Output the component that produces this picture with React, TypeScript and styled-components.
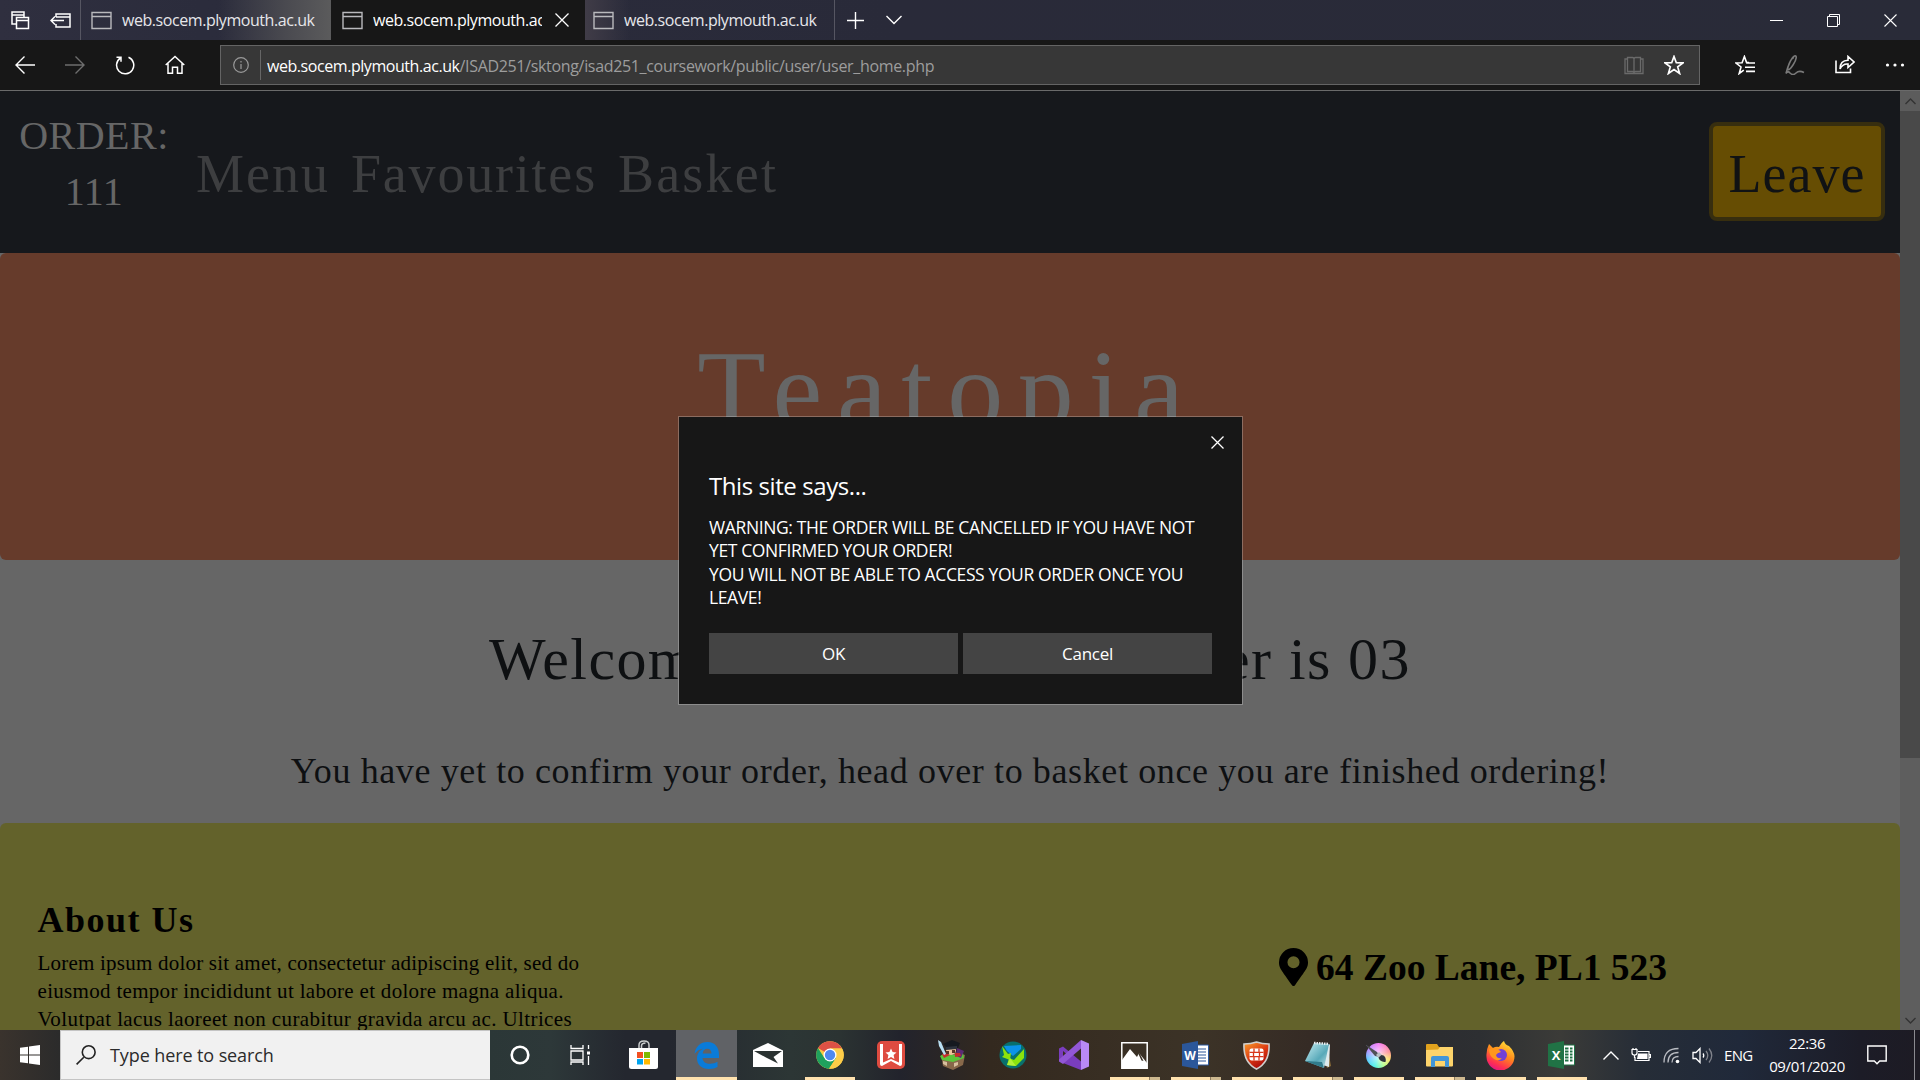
import React from 'react';
import styled, { createGlobalStyle } from 'styled-components';

const serif = '"Liberation Serif", serif';
const sans = '"Open Sans", "Noto Sans", sans-serif';

const Global = createGlobalStyle`
  * { box-sizing: border-box; }
  body { margin: 0; background: #171717; overflow: hidden; }
  svg { display: block; flex: none; }
`;

const Screen = styled.div`
  position: relative;
  display: flex;
  flex-direction: column;
  width: 1920px;
  height: 1080px;
  overflow: hidden;
  white-space: nowrap;
`;

/* ---------- Tab strip ---------- */
const TabStrip = styled.div`
  display: flex;
  height: 40px;
  background: linear-gradient(90deg, #2f2f3f 0, #2b2c3c 200px, #292a39 900px, #292b38 1920px);
  color: #fff;
`;
const TabTools = styled.div`
  display: flex;
  align-items: center;
  gap: 20px;
  width: 81px;
  padding-left: 10px;
  border-right: 1px solid #565662;
`;
const Tab = styled.div<{ $width: number; $kind: 'glow' | 'active' | 'plain' }>`
  display: flex;
  align-items: center;
  gap: 10px;
  width: ${p => p.$width}px;
  padding-left: ${p => (p.$kind === 'active' ? 11 : p.$kind === 'plain' ? 8 : 10)}px;
  font: 16px ${sans};
  letter-spacing: -0.44px;
  color: ${p => (p.$kind === 'active' ? '#fff' : '#e6e6ea')};
  background: ${p =>
    p.$kind === 'active'
      ? '#171717'
      : p.$kind === 'glow'
        ? 'linear-gradient(90deg, transparent 55%, #4a4a50 82%, #5b5b5c)'
        : 'linear-gradient(90deg, #403c47, transparent 18%)'};
  border-right: ${p => (p.$kind === 'plain' ? '1px solid #565662' : '0')};
`;
const TabTitle = styled.span<{ $clip?: boolean }>`
  width: ${p => (p.$clip ? '169px' : 'auto')};
  margin-right: ${p => (p.$clip ? '3px' : '0')};
  overflow: hidden;
  line-height: 38px;
`;
const TabActions = styled.div`
  display: flex;
  align-items: center;
  gap: 22px;
  flex: 1;
  padding-left: 12px;
`;
const WindowButtons = styled.div`
  display: flex;
  align-items: center;
  gap: 44px;
  padding-right: 23px;
`;

/* ---------- Address bar ---------- */
const NavBar = styled.div`
  display: flex;
  height: 51px;
  background: #171717;
  border-bottom: 1px solid #6a6a6a;
  padding-top: 5px;
`;
const NavButtons = styled.div`
  display: flex;
  align-items: center;
  gap: 30px;
  width: 220px;
  height: 40px;
  padding-left: 15px;
`;
const UrlBox = styled.div`
  display: flex;
  align-items: center;
  width: 1480px;
  height: 40px;
  background: #373737;
  border: 1px solid #646464;
  padding: 0 15px 0 12px;
  font: 16px ${sans};
  color: #9d9d9d;
`;
const UrlDivider = styled.i`
  width: 1px;
  height: 30px;
  margin: 0 6px 0 11px;
  background: #666;
`;
const UrlHost = styled.span`
  color: #fff;
  letter-spacing: -0.44px;
  padding-top: 1px;
`;
const UrlPath = styled.span`
  flex: 1;
  letter-spacing: -0.33px;
  padding-top: 1px;
`;
const UrlIcons = styled.div`
  display: flex;
  align-items: center;
  gap: 20px;
`;
const NavTools = styled.div`
  display: flex;
  align-items: center;
  height: 40px;
  gap: 30px;
  padding-left: 35px;
`;

/* ---------- Page ---------- */
const Viewport = styled.div`
  display: flex;
  height: 939px;
  background: #666;
`;
const Page = styled.div`
  width: 1900px;
  height: 939px;
  overflow: hidden;
  font-family: ${serif};
  color: #0e1012;
`;
const ScrollBar = styled.div`
  display: flex;
  flex-direction: column;
  justify-content: space-between;
  width: 20px;
  background: linear-gradient(#5c5c5c 20px, #494949 20px, #494949 667px, #5e5e5e 667px);
`;
const ScrollArrow = styled.div`
  display: flex;
  align-items: center;
  justify-content: center;
  height: 20px;
`;
const SiteHeader = styled.header`
  display: flex;
  height: 162px;
  padding: 0 15px 0 18px;
  background: #16181c;
`;
const OrderBox = styled.div`
  width: 152px;
  padding-top: 17px;
  font-size: 40px;
  line-height: 56px;
  letter-spacing: 0.5px;
  text-align: center;
  color: #666;
`;
const SiteNav = styled.nav`
  display: flex;
  flex: 1;
  gap: 21px;
  padding: 56px 0 0 26px;
`;
const SiteLink = styled.a<{ $track: number }>`
  font-size: 54px;
  line-height: 54px;
  letter-spacing: ${p => p.$track}px;
  color: #3d3e40;
`;
const LeaveButton = styled.div`
  width: 176px;
  height: 99px;
  margin-top: 31px;
  padding-top: 3px;
  border: 4px solid #372e0f;
  border-radius: 8px;
  background: #664d03;
  color: #101214;
  font-size: 54px;
  line-height: 91px;
  letter-spacing: 1px;
  text-align: center;
`;
const Hero = styled.div`
  display: flex;
  align-items: center;
  justify-content: center;
  height: 307px;
  padding: 0 4px 32px 0;
  border-radius: 6px;
  background: #663b2b;
  color: #666;
  font-size: 112px;
  letter-spacing: 14.7px;
`;
const Greeting = styled.section`
  height: 263px;
  padding-top: 63px;
  text-align: center;
`;
const GreetingTitle = styled.div`
  font-size: 60px;
  line-height: 72px;
  letter-spacing: 1.4px;
`;
const WideWords = styled.span`
  word-spacing: 14px;
`;
const GreetingNote = styled.div`
  margin-top: 54px;
  font-size: 36px;
  line-height: 44px;
  letter-spacing: 0.62px;
`;
const Footer = styled.footer`
  display: flex;
  height: 240px;
  border-radius: 6px;
  background: #63622b;
  color: #000;
`;
const About = styled.div`
  width: 1279px;
  padding: 75px 0 0 37.5px;
`;
const AboutTitle = styled.div`
  font-size: 36px;
  font-weight: 700;
  line-height: 44px;
  letter-spacing: 1.5px;
  margin-bottom: 6.5px;
`;
const AboutLine = styled.div<{ $track: number }>`
  font-size: 21px;
  line-height: 28px;
  letter-spacing: ${p => p.$track}px;
`;
const Address = styled.div`
  display: flex;
  align-items: center;
  gap: 8px;
  height: 44px;
  margin-top: 122px;
  font-size: 37.5px;
  font-weight: 700;
`;

/* ---------- Dialog ---------- */
const Dialog = styled.div`
  position: absolute;
  left: 678px;
  top: 416px;
  width: 565px;
  height: 289px;
  padding: 54px 30px 0;
  border: 1px solid rgba(255, 255, 255, 0.25);
  background: #171717;
  background-clip: padding-box;
  color: #fff;
  font-family: ${sans};
`;
const DialogClose = styled.div`
  position: absolute;
  right: 18px;
  top: 19px;
`;
const DialogTitle = styled.div`
  font-size: 24px;
  line-height: 30px;
  letter-spacing: -0.42px;
`;
const DialogText = styled.div`
  margin: 15px 0 23.8px;
  font-size: 17.5px;
  line-height: 23.3px;
  letter-spacing: -0.38px;
`;
const DialogButtons = styled.div`
  display: flex;
  gap: 5px;
`;
const DialogButton = styled.div`
  flex: 1;
  height: 41px;
  background: #444;
  font-size: 17px;
  line-height: 42px;
  letter-spacing: -0.3px;
  text-align: center;
`;

/* ---------- Taskbar ---------- */
const TaskBar = styled.div`
  display: flex;
  height: 50px;
  color: #fff;
  font-family: ${sans};
  background: linear-gradient(90deg, #3a332d 0, #2b2b2b 60px, #2b3737 490px, #2d3839 550px, #24272f 625px, #24272f 670px,
    #2c3635 790px, #2b3332 840px, #22232c 900px, #33291f 990px, #372d22 1080px, #3c3327 1200px, #352b25 1310px,
    #2b2b2e 1400px, #2d2f32 1480px, #3b3b38 1560px, #262d37 1640px, #20293a 1740px, #1c1c27 1860px, #1d1b24 1920px);
`;
const Cell = styled.div<{ $width: number; $active?: boolean }>`
  position: relative;
  display: flex;
  align-items: center;
  justify-content: center;
  width: ${p => p.$width}px;
  background: ${p => (p.$active ? '#606266' : 'transparent')};
`;
const SearchBox = styled.div`
  display: flex;
  align-items: center;
  gap: 14px;
  width: 430px;
  padding-left: 15px;
  background: #f1f1f1;
  border: 1px solid #c4c4c4;
  border-right: 0;
  color: #2b2b2b;
  font-size: 18px;
  letter-spacing: -0.1px;
`;
const Running = styled.i<{ $width: number; $stack?: boolean }>`
  position: absolute;
  bottom: 0;
  width: ${p => p.$width}px;
  height: 3px;
  background: ${p => (p.$stack ? 'linear-gradient(90deg, #ffe2ae 39px, #8d7b5e 39px, #8d7b5e 40px, #cdb88f 40px)' : '#ffe2ae')};
`;
const Tray = styled.div`
  display: flex;
  align-items: center;
  flex: 1;
  padding-left: 11px;
  font-size: 15px;
`;
const TrayIcons = styled.div`
  display: flex;
  align-items: center;
  gap: 12px;
  width: 121px;
`;
const Language = styled.div`
  width: 43px;
  letter-spacing: -0.7px;
`;
const Clock = styled.div`
  width: 80px;
  line-height: 23px;
  letter-spacing: -0.4px;
  text-align: center;
`;
const ActionCell = styled.div`
  display: flex;
  align-items: center;
  width: 68px;
  height: 50px;
  padding-left: 20px;
  border-right: 1px solid #8a8a90;
`;

/* ---------- Icons ---------- */
type LineProps = { w: number; h: number; d: string; c?: string; s?: number; children?: React.ReactNode };
const Line = ({ w, h, d, c = '#fff', s = 1.4, children }: LineProps) => (
  <svg width={w} height={h} viewBox={`0 0 ${w} ${h}`} fill="none" stroke={c} strokeWidth={s}>
    <path d={d} />
    {children}
  </svg>
);
const PageIcon = () => <Line w={21} h={19} c="#b9b9bd" d="M1 1.5h19v16H1zM1 5.5h19" />;
const CloseIcon = ({ size = 13, w = 1.3 }: { size?: number; w?: number }) => (
  <Line w={size} h={size} s={w} d={`M.5 .5L${size - 0.5} ${size - 0.5}M${size - 0.5} .5L.5 ${size - 0.5}`} />
);

const StoreIcon = () => (
  <svg width="30" height="30" viewBox="0 0 30 30">
    <path d="M10 9V5q0-4 5-4t5 4v4M12.500 9V6q0-3 4-3" fill="none" stroke="#c9cccd" strokeWidth="1.500" />
    <path d="M0 8h29v18.500q0 2.500-2.500 2.500h-24Q0 29 0 26.500z" fill="#fff" />
    <path d="M8 12h6v6H8z" fill="#f25022" /><path d="M15 12h6v6h-6z" fill="#7fba00" />
    <path d="M8 19h6v5.500H8z" fill="#00a4ef" /><path d="M15 19h6v5.500h-6z" fill="#ffb900" />
  </svg>
);
const EdgeIcon = () => (
  <svg width="26" height="27" viewBox="0 0 26 27">
    <path d="M.5 12C1.500 4.500 6.500 0 13.500 0 21 0 25 5.500 25 12.500V16H8.500c.3 4 3.300 5.800 7.500 5.800 3 0 5.500-.8 7.500-2V25c-2.300 1.200-5 2-8.500 2C7.500 27 3 22.500 3 16.500c0-4.500 2.500-8 6.500-10C5.500 7 2.500 9 .5 12zM8.700 11.500h8.800C17.400 8.500 16 6.800 13.300 6.800s-4.300 2-4.600 4.700z" fill="#0a7bd8" fillRule="evenodd" />
  </svg>
);
const MailIcon = () => (
  <svg width="30" height="25" viewBox="0 0 30 25">
    <path d="M0 7L15 0l15 7.500V24H0z" fill="#fff" />
    <path d="M1 8h28l-8.500 6L25 20.500 13 14.500z" fill="#2a3231" />
  </svg>
);
const ChromeIcon = () => (
  <svg width="28" height="28" viewBox="0 0 28 28">
    <circle cx="14" cy="14" r="13.800" fill="#f9cb45" />
    <path d="M14 14L2 7.100A13.800 13.800 0 0 1 26 7.500H14z" fill="#de5145" />
    <path d="M2 7.100A13.800 13.800 0 0 0 13 27.800L20 17 8.400 17z" fill="#1fa15d" />
    <path d="M14 7.500h12A13.800 13.800 0 0 1 13 27.800l7-10.500z" fill="#fdcd48" />
    <circle cx="14" cy="14" r="6.500" fill="#fff" /><circle cx="14" cy="14" r="5.200" fill="#4f89f0" />
  </svg>
);
const WunderIcon = () => (
  <svg width="28" height="28" viewBox="0 0 28 28">
    <rect width="28" height="28" rx="5" fill="#de4b40" />
    <path d="M3 3h3v18.500L14 18l8 3.500V3h3v20q0 2-2 2l-9-5-9 5q-2 0-2-2z" fill="#fff" />
    <path d="M14 7.500l1.600 3.600 3.900.4-2.900 2.600.8 3.900-3.400-2-3.400 2 .8-3.900-2.900-2.600 3.900-.4z" fill="#fff" />
  </svg>
);
const GameIcon = () => (
  <svg width="30" height="30" viewBox="0 0 30 30">
    <path d="M4 15l13-3 11 3-2 10-10 5-10-4z" fill="#87684a" />
    <path d="M3 16l6-3 8 2 9-2 1 5-11 4-11-2z" fill="#5cc43a" />
    <path d="M6 21l4 1v4l-4-2zM17 23l4-1v3l-4 2z" fill="#d8c09e" />
    <path d="M20 8l7 3-3 7-5-2z" fill="#5b2c75" /><path d="M5 14l5-2 3 3-6 3zM18 13l5 0 1 3-6 1z" fill="#c62d2b" />
    <circle cx="14" cy="10" r="5" fill="#efc49c" /><path d="M9 11h3v3H9zM15 10h3v3h-3z" fill="#5a3524" />
    <path d="M6 4l9-4 8 3-2 5-10 1z" fill="#15191f" /><path d="M9 7l11-1v3L9 10z" fill="#2c333d" />
    <path d="M1 0l3 2 5 12-2 1L2 6z" fill="#b9dff2" />
  </svg>
);
const ArrowsIcon = () => (
  <svg width="28" height="28" viewBox="0 0 28 28">
    <circle cx="14" cy="14" r="13.500" fill="#08706d" />
    <path d="M5 5l17-1 0 4-8 7-6-5z" fill="#0b93e8" />
    <path d="M3 5l6 8 3-1-1 7-8-3 2-2z" fill="#8be30d" />
    <path d="M25 8v9l-8 8-9-1 2-7 5 2z" fill="#8be30d" /><path d="M8 24l3-7 6 8z" fill="#b2f038" />
  </svg>
);
const VsIcon = () => (
  <svg width="30" height="30" viewBox="0 0 30 30">
    <path d="M0 8.500l4-2L22 21.500V30L4 23l-4-2zM4 11v8.500l5-4.300z" fill="#7a3dbd" fillRule="evenodd" />
    <path d="M4 24l-4-2.500 0-2L22 0v8.500z" fill="#9257d6" />
    <path d="M22 0l8 3.500v23L22 30z" fill="#b98af5" />
  </svg>
);
const PhotosIcon = () => (
  <svg width="27" height="27" viewBox="0 0 27 27">
    <path d="M.8.800h25.400v25.400H.800z" fill="none" stroke="#fff" strokeWidth="1.500" />
    <path d="M1 18l8-11 7 8 2-4 8 10v6H1z" fill="#fff" /><path d="M16.500 10l2 1 4 8-2-.5z" fill="#3a3024" />
  </svg>
);
const WordIcon = () => (
  <svg width="28" height="28" viewBox="0 0 28 28">
    <path d="M14 4h12.500v20H14z" fill="#fff" stroke="#2b579a" />
    <path d="M16 8h8M16 11h8M16 14h8M16 17h8M16 20h8" stroke="#2b579a" strokeWidth="1.200" />
    <path d="M0 3l16-3v28L0 25z" fill="#2b579a" />
    <text x="8" y="18.500" textAnchor="middle" fontFamily="Open Sans" fontWeight="700" fontSize="12" fill="#fff">W</text>
  </svg>
);
const ExcelIcon = () => (
  <svg width="28" height="28" viewBox="0 0 28 28">
    <path d="M14 4h12.500v20H14z" fill="#fff" stroke="#207245" />
    <path d="M17 7.500h3.500M17 10.500h3.500M17 13.500h3.500M17 16.500h3.500M17 19.500h3.500M22 7.500h2.500M22 10.500h2.500M22 13.500h2.500M22 16.500h2.500M22 19.500h2.500" stroke="#207245" strokeWidth="2" />
    <path d="M0 3l16-3v28L0 25z" fill="#207245" />
    <text x="8" y="19" textAnchor="middle" fontFamily="Open Sans" fontWeight="700" fontSize="13" fill="#fff">X</text>
  </svg>
);
const ShieldIcon = () => (
  <svg width="27" height="29" viewBox="0 0 27 29">
    <defs><linearGradient id="sh" x2="0.600" y2="1"><stop stopColor="#f9a02c" /><stop offset=".55" stopColor="#dd3a12" /><stop offset="1" stopColor="#a80b0b" /></linearGradient></defs>
    <path d="M1 3Q8 3 13.500 1 19 3 26 3q1 18-12.500 25Q0 21 1 3z" fill="url(#sh)" stroke="#d0cfcd" strokeWidth="1.600" />
    <rect x="6.500" y="7.500" width="14" height="12" rx="2" fill="#fff" />
    <path d="M11 7.500v3.500M16 7.500v3.500M6.500 11.300h14M6.500 15.600h14M11 15.600v4M16 15.600v4M10.500 11v5M16.500 11v5" stroke="#d8361a" strokeWidth="1.300" />
  </svg>
);
const NotepadIcon = () => (
  <svg width="28" height="28" viewBox="0 0 28 28">
    <defs><linearGradient id="np" x2="1" y2="1"><stop stopColor="#c8eef3" /><stop offset=".6" stopColor="#58a9b9" /><stop offset="1" stopColor="#cfe6ea" /></linearGradient></defs>
    <path d="M23 4l4 21-4 2-2-9z" fill="#8c6c38" /><path d="M20 8l6-5-1 23-6-2z" fill="#dfeaec" />
    <path d="M10 2L25 3 20 27 1 20z" fill="url(#np)" /><path d="M1 20l17 1 2 6z" fill="#317b8b" />
    <path d="M10 2L25 3" stroke="#e9eef0" strokeWidth="2.500" strokeDasharray="1.500 1" />
  </svg>
);
const Conic = styled.span`
  display: flex;
  width: 25px;
  height: 25px;
  border-radius: 50%;
  background: radial-gradient(circle, rgba(255, 255, 255, 0.75), transparent 70%),
    conic-gradient(#f47df5, #ff8f96 70deg, #ffe36a 110deg, #b8ff8a 150deg, #4df3e8 200deg, #5cc9ff 250deg, #b78bff 300deg, #f47df5);
`;
const KritaIcon = () => (
  <Conic>
    <svg width="25" height="25" viewBox="0 0 25 25">
      <path d="M-1 1l12 8 3 5-5-1z" fill="#4f5257" /><path d="M10 12l3-3 3 3-3 3z" fill="#b9bdc2" />
      <path d="M12.500 14.500l3-2.500c3 0 5 3 4 7-3 0-6-1-7-4.500z" fill="#30343c" />
    </svg>
  </Conic>
);
const FolderIcon = () => (
  <svg width="28" height="23" viewBox="0 0 28 23">
    <path d="M0 1q0-1 1-1h10l2 3h13q1 0 1 1v17H0z" fill="#e1a21d" /><path d="M0 6l12-.5L14 3h13v18.500q0 1-1 1H1q-1 0-1-1z" fill="#fdd46b" />
    <path d="M5 23v-9q0-2 2-2h14q2 0 2 2v9h-4v-6H9v6z" fill="#4296d8" />
  </svg>
);
const FirefoxIcon = () => (
  <svg width="29" height="29" viewBox="0 0 29 29">
    <defs><linearGradient id="ff" x1=".8" y1="0" x2=".3" y2="1"><stop stopColor="#ffe53a" /><stop offset=".45" stopColor="#ff8a1c" /><stop offset=".8" stopColor="#ff3150" /><stop offset="1" stopColor="#e31587" /></linearGradient></defs>
    <path d="M3 3l4 4q3-2 6-1 3-5 5-6 1 4 5 5 5 5 5.500 10A14 14 0 0 1 .5 16Q0 9 3 3z" fill="url(#ff)" />
    <circle cx="15" cy="14" r="6" fill="#7140d6" /><path d="M3 8q5-2 8-1l4 4q-4 1-5 3 1 4 6 3-3 4-8 1Q3 15 3 8z" fill="#ff971c" />
  </svg>
);

const tasks: { icon: React.ReactNode; width?: number; run?: boolean; stack?: boolean }[] = [
  { icon: <MailIcon />, width: 62 },
  { icon: <ChromeIcon />, run: true },
  { icon: <WunderIcon /> },
  { icon: <GameIcon /> },
  { icon: <ArrowsIcon /> },
  { icon: <VsIcon /> },
  { icon: <PhotosIcon />, run: true, stack: true },
  { icon: <WordIcon />, run: true, stack: true },
  { icon: <ShieldIcon />, run: true },
  { icon: <NotepadIcon />, run: true, stack: true },
  { icon: <KritaIcon />, run: true },
  { icon: <FolderIcon />, run: true, stack: true },
  { icon: <FirefoxIcon />, run: true },
  { icon: <ExcelIcon />, run: true },
];

const star = 'M10 1.500l2.300 6.200 6.700.2-5.300 4 1.900 6.600L10 14.600l-5.600 3.900 1.900-6.600L1 7.900l6.700-.2z';

export default function App() {
  return (
    <Screen>
      <Global />
      <TabStrip>
        <TabTools>
          <Line w={20} h={19} s={1.5} d="M6 13H2V1h12v5M2 4h12M6.500 6.500h12v11h-12zM6.500 9.500h12" />
          <Line w={21} h={17} s={1.5} d="M6 5V2h14v13H6v-3M6 5h14M14 8.500H1M5 4.500l-4 4 4 4" />
        </TabTools>
        <Tab $width={250} $kind="glow"><PageIcon /><TabTitle>web.socem.plymouth.ac.uk</TabTitle></Tab>
        <Tab $width={254} $kind="active">
          <PageIcon /><TabTitle $clip>web.socem.plymouth.ac.uk</TabTitle><CloseIcon size={14} />
        </Tab>
        <Tab $width={250} $kind="plain"><PageIcon /><TabTitle>web.socem.plymouth.ac.uk</TabTitle></Tab>
        <TabActions>
          <Line w={17} h={17} d="M8.500 0v17M0 8.500h17" />
          <Line w={16} h={10} d="M.5 1l7.500 7.500L15.500 1" />
        </TabActions>
        <WindowButtons>
          <Line w={13} h={13} s={1} d="M0 6.500h13" />
          <Line w={13} h={13} s={1} d="M.5 2.500h10v10H.5zM2.500 2.500v-2h10v10h-2" />
          <CloseIcon size={13} w={1.1} />
        </WindowButtons>
      </TabStrip>

      <NavBar>
        <NavButtons>
          <Line w={20} h={18} d="M9.500 .5L1 9l8.500 8.500M1 9h19" />
          <Line w={20} h={18} c="#6e6e6e" d="M10.500 .5L19 9l-8.500 8.500M0 9h19" />
          <Line w={20} h={20} s={1.5} d="M13.500 2.300A8.600 8.600 0 1 1 5.500 3M1.500 2.200H6v4.600" />
          <Line w={20} h={20} s={1.5} d="M.700 10L10 1.500 19.300 10M3 8.500v9.700h4.500v-6h5v6H17V8.500" />
        </NavButtons>
        <UrlBox>
          <Line w={16} h={16} s={1.2} c="#9a9a9a" d="M8 7v5M8 4v1.500"><circle cx="8" cy="8" r="7.300" /></Line>
          <UrlDivider />
          <UrlHost>web.socem.plymouth.ac.uk</UrlHost>
          <UrlPath>/ISAD251/sktong/isad251_coursework/public/user/user_home.php</UrlPath>
          <UrlIcons>
            <Line w={20} h={19} s={1.3} c="#6a6a6a" d="M3.500 1.500h5q1.500 0 1.500 1.500 0-1.500 1.500-1.500h5v14h-5q-1.500 0-1.500 1 0-1-1.500-1h-5zM10 2v15M3.500 3H1v14.500h18V3h-2.500" />
            <Line w={20} h={20} s={1.7} d={star} />
          </UrlIcons>
        </UrlBox>
        <NavTools>
          <Line w={20} h={20} s={1.6} d="M14 7.600l-2.400 0L9.400 1.500 7.100 7.700 1 8l5 4-1.800 6.500 4.600-3.400M11.500 8h8.500M10 12.200h10M11 16.400h9" />
          <Line w={20} h={20} s={1.6} c="#7a7a7a" d="M1 18.500C3 10 7 2 9.500 1S12 4 8 10s-6 6-5 2 4-10 6-9M1 18.500q2-3 4-.5 3 3 6 0t8-.5" />
          <Line w={20} h={20} s={1.6} d="M1 5.500v12h14.500v-4M5 14q0-8.500 8-8.700V1.500L19 7l-6 5.500V9Q7.500 8.500 5 14z" />
          <Line w={20} h={4} s={0} d=""><g fill="#fff"><circle cx="2.500" cy="2" r="1.600" /><circle cx="10" cy="2" r="1.600" /><circle cx="17.500" cy="2" r="1.600" /></g></Line>
        </NavTools>
      </NavBar>

      <Viewport>
        <Page>
          <SiteHeader>
            <OrderBox>ORDER:<br />111</OrderBox>
            <SiteNav>
              <SiteLink $track={2}>Menu</SiteLink>
              <SiteLink $track={1.8}>Favourites</SiteLink>
              <SiteLink $track={2.2}>Basket</SiteLink>
            </SiteNav>
            <LeaveButton>Leave</LeaveButton>
          </SiteHeader>
          <Hero>Teatopia</Hero>
          <Greeting>
            <GreetingTitle>Welcome<WideWords>! Your table </WideWords>number is 03</GreetingTitle>
            <GreetingNote>You have yet to confirm your order, head over to basket once you are finished ordering!</GreetingNote>
          </Greeting>
          <Footer>
            <About>
              <AboutTitle>About Us</AboutTitle>
              <AboutLine $track={0.22}>Lorem ipsum dolor sit amet, consectetur adipiscing elit, sed do</AboutLine>
              <AboutLine $track={0.31}>eiusmod tempor incididunt ut labore et dolore magna aliqua.</AboutLine>
              <AboutLine $track={0.4}>Volutpat lacus laoreet non curabitur gravida arcu ac. Ultrices</AboutLine>
            </About>
            <Address>
              <svg width="29" height="38" viewBox="0 0 384 512" preserveAspectRatio="none">
                <path d="M172 502C27 291 0 270 0 192a192 192 0 0 1 384 0c0 78-27 99-172 310a24 24 0 0 1-40 0zM192 272a80 80 0 1 0 0-160 80 80 0 0 0 0 160z" />
              </svg>
              64 Zoo Lane, PL1 523
            </Address>
          </Footer>
        </Page>
        <ScrollBar>
          <ScrollArrow><Line w={11} h={7} c="#333" d="M.5 6l5-5 5 5" /></ScrollArrow>
          <ScrollArrow><Line w={11} h={7} c="#333" d="M.5 1l5 5 5-5" /></ScrollArrow>
        </ScrollBar>
      </Viewport>

      <TaskBar>
        <Cell $width={60}>
          <svg width="20" height="20" viewBox="0 0 20 20" fill="#fff"><path d="M0 2.800L8 1.700v7.800H0zM9 1.500L20 0v9.500H9zM0 10.500h8v7.800l-8-1.100zM9 10.500h11V20L9 18.500z" /></svg>
        </Cell>
        <SearchBox>
          <Line w={20} h={20} c="#222" s={1.6} d="M7.800 12.200L.6 19.400"><circle cx="12.700" cy="7.200" r="6.400" /></Line>
          Type here to search
        </SearchBox>
        <Cell $width={60}><Line w={20} h={20} s={2.6} d=""><circle cx="10" cy="10" r="8.300" /></Line></Cell>
        <Cell $width={61}>
          <Line w={21} h={20} s={1.3} d="M1 0v3.500h12V0M1 6h12v9H1zM1 20v-3h12v3M18.500 0v4M18.500 11v9"><path d="M17 6.500h3v3h-3z" fill="#fff" stroke="none" /></Line>
        </Cell>
        <Cell $width={65}><StoreIcon /></Cell>
        <Cell $width={61} $active><EdgeIcon /><Running $width={61} /></Cell>
        {tasks.map((t, i) => (
          <Cell key={i} $width={t.width ?? 61}>
            {t.icon}
            {t.run && <Running $width={50} $stack={t.stack} />}
          </Cell>
        ))}
        <Tray>
          <TrayIcons>
            <Line w={16} h={9} d="M.5 8.500L8 1l7.500 7.500" />
            <Line w={20} h={14} s={1.2} d="M7 3.500h11v9H4V9M18 6.500h1.500v3H18M1 1.500h5V5q0 2-2.500 2T1 5zM2 0v2M5 0v2M3.500 7v3"><path d="M7 5.500h9.500v5.500H6z" fill="#fff" stroke="none" /></Line>
            <Line w={17} h={17} s={1.3} c="#b9bcc2" d="M1 15.500Q1 1.500 15.500 1.500M5 15.500Q5 5.500 15.500 5.500M9 15.500q0-6 6.500-6"><circle cx="14.500" cy="14.500" r="1.800" fill="#fff" stroke="none" /></Line>
            <Line w={21} h={17} s={1.3} d="M1 5.500h3l4-4v14l-4-4H1zM11 6.500q1.500 2 0 4"><path d="M14 4q3.500 4.500 0 9M17 1.500q5.500 7 0 14" stroke="#80838b" /></Line>
          </TrayIcons>
          <Language>ENG</Language>
          <Clock>22:36<br />09/01/2020</Clock>
          <ActionCell>
            <Line w={20} h={20} s={1.4} d="M.8 1h18.400v15h-6.500L10 18.800 7.300 16H.8z" />
          </ActionCell>
        </Tray>
      </TaskBar>

      <Dialog>
        <DialogClose><CloseIcon size={13} /></DialogClose>
        <DialogTitle>This site says...</DialogTitle>
        <DialogText>
          WARNING: THE ORDER WILL BE CANCELLED IF YOU HAVE NOT<br />
          YET CONFIRMED YOUR ORDER!<br />
          YOU WILL NOT BE ABLE TO ACCESS YOUR ORDER ONCE YOU<br />
          LEAVE!
        </DialogText>
        <DialogButtons>
          <DialogButton>OK</DialogButton>
          <DialogButton>Cancel</DialogButton>
        </DialogButtons>
      </Dialog>
    </Screen>
  );
}
